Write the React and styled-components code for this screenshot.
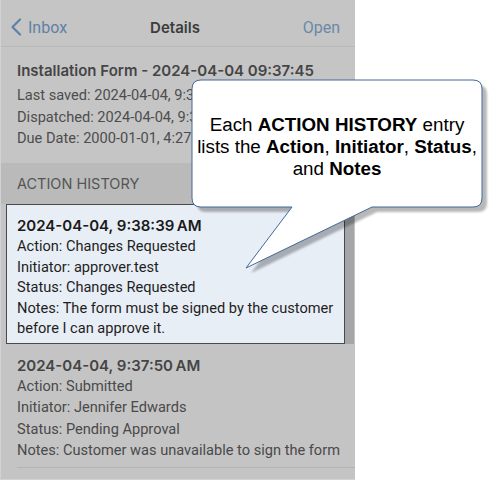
import React from "react";
import styled, { createGlobalStyle } from "styled-components";

const GlobalStyle = createGlobalStyle`
  html, body {
    margin: 0;
    padding: 0;
    background: #ffffff;
  }
  body {
    font-family: Roboto, "Noto Sans", sans-serif;
  }
`;

const entries = [
  {
    time: "2024-04-04, 9:38:39\u2009AM",
    action: "Changes Requested",
    initiator: "approver.test",
    status: "Changes Requested",
    notes: "The form must be signed by the customer before I can approve it.",
    active: true,
  },
  {
    time: "2024-04-04, 9:37:50\u2009AM",
    action: "Submitted",
    initiator: "Jennifer Edwards",
    status: "Pending Approval",
    notes: "Customer was unavailable to sign the form",
  },
];

const App = () => {
  return (
    <Page>
      <GlobalStyle />
      <Phone>
        <NavBar>
          <BackLink>
            <svg width="12" height="18" viewBox="0 0 12 18">
              <path
                d="M10 1.5 L2.5 9 L10 16.5"
                fill="none"
                stroke="#5f81a4"
                strokeWidth="2.2"
                strokeLinecap="round"
                strokeLinejoin="round"
              />
            </svg>
            Inbox
          </BackLink>
          <NavTitle>Details</NavTitle>
          <NavAction>Open</NavAction>
        </NavBar>

        <InfoSection>
          <FormTitle>Installation Form - 2024-04-04 09:37:45</FormTitle>
          <InfoLines>
            <InfoLine>Last saved: 2024-04-04, 9:37:45 AM</InfoLine>
            <InfoLine>Dispatched: 2024-04-04, 9:37:45 AM</InfoLine>
            <InfoLine>Due Date: 2000-01-01, 4:27 PM</InfoLine>
          </InfoLines>
        </InfoSection>

        <SectionHeader>ACTION HISTORY</SectionHeader>

        {entries.map((e, idx) => (
          <Entry key={`entry_${idx}`} $active={e.active}>
            <EntryTime $active={e.active}>{e.time}</EntryTime>
            <EntryLine $active={e.active}>Action: {e.action}</EntryLine>
            <EntryLine $active={e.active}>Initiator: {e.initiator}</EntryLine>
            <EntryLine $active={e.active}>Status: {e.status}</EntryLine>
            <EntryLine $active={e.active}>Notes: {e.notes}</EntryLine>
          </Entry>
        ))}
      </Phone>

      <Callout>
        <svg width="305" height="205" viewBox="0 0 305 205">
          <defs>
            <filter id="soft" x="-10%" y="-10%" width="130%" height="130%">
              <feGaussianBlur stdDeviation="0.8" />
            </filter>
          </defs>
          <path
            d="M13 4 H285 Q294 4 294 13 V122 Q294 131 285 131 H184 L58 192 L104 131 H13 Q4 131 4 122 V13 Q4 4 13 4 Z"
            fill="rgba(0,0,0,0.28)"
            transform="translate(5 5)"
            filter="url(#soft)"
          />
          <path
            d="M13 4 H285 Q294 4 294 13 V122 Q294 131 285 131 H184 L58 192 L104 131 H13 Q4 131 4 122 V13 Q4 4 13 4 Z"
            fill="#ffffff"
            stroke="#41699a"
            strokeWidth="1"
          />
        </svg>
        <CalloutText>
          Each <b>ACTION HISTORY</b> entry
          <br />
          lists the <b>Action</b>, <b>Initiator</b>, <b>Status</b>,
          <br />
          and <b>Notes</b>
        </CalloutText>
      </Callout>
    </Page>
  );
};

const Page = styled.div`
  position: relative;
  width: 497px;
  height: 481px;
  overflow: hidden;
  background: #ffffff;
`;

const Phone = styled.div`
  width: 355px;
  height: 480px;
  background: #c4c4c4;
  border-left: 1px solid #d2d2d2;
  border-bottom: 1px solid #d2d2d2;
  box-sizing: border-box;
  display: flex;
  flex-direction: column;
  overflow: hidden;

  & > * {
    flex-shrink: 0;
  }
`;

const NavBar = styled.div`
  height: 47px;
  box-sizing: border-box;
  padding: 8px 15px 0 9px;
  display: grid;
  grid-template-columns: 1fr auto 1fr;
  align-items: center;
  border-bottom: 1px solid #b9b9b9;
  background: #c5c5c5;
  font-size: 16px;
`;

const BackLink = styled.div`
  display: flex;
  align-items: center;
  gap: 6px;
  color: #5f81a4;
`;

const NavTitle = styled.div`
  font-family: Inter, sans-serif;
  font-size: 15px;
  font-weight: 600;
  color: #3c3c3c;
`;

const NavAction = styled.div`
  justify-self: end;
  color: #6a89a8;
`;

const InfoSection = styled.div`
  padding: 12px 16px 13px;
  background: #c5c5c5;
  color: #4d4d4d;
  font-size: 14.6px;
`;

const FormTitle = styled.div`
  font-family: Inter, sans-serif;
  font-size: 15px;
  font-weight: 600;
  line-height: 24px;
  color: #454545;
`;

const InfoLines = styled.div`
  margin-top: 2px;
`;

const InfoLine = styled.div`
  line-height: 21.5px;
`;

const SectionHeader = styled.div`
  height: 41px;
  display: flex;
  align-items: center;
  padding-left: 16px;
  background: #bababa;
  color: #555555;
  font-family: Inter, sans-serif;
  font-size: 14.5px;
`;

const Entry = styled.div`
  margin: ${(p) => (p.$active ? "0 10px 0 5px" : "0 0 0 16px")};
  padding: ${(p) => (p.$active ? "11px 3px 4px 10px" : "11px 0 6px")};
  background: ${(p) => (p.$active ? "#e8eef6" : "transparent")};
  border: ${(p) => (p.$active ? "1px solid #4a4a4a" : "none")};
  border-bottom: 1px solid ${(p) => (p.$active ? "#4a4a4a" : "#b3b3b3")};
  box-shadow: ${(p) => (p.$active ? "9px 0 0 #a4a6a8" : "none")};
  font-size: 14.6px;
`;

const EntryTime = styled.div`
  font-family: Inter, sans-serif;
  font-weight: 600;
  font-size: 15px;
  line-height: ${(p) => (p.$active ? "20.6px" : "21px")};
  color: ${(p) => (p.$active ? "#1a1a1a" : "#444444")};
`;

const EntryLine = styled.div`
  line-height: ${(p) => (p.$active ? "20.6px" : "21.3px")};
  color: ${(p) => (p.$active ? "#1e1e1e" : "#4a4a4a")};
`;

const Callout = styled.div`
  position: absolute;
  left: 188px;
  top: 76px;
  width: 305px;
  height: 205px;
`;

const CalloutText = styled.div`
  position: absolute;
  left: 0;
  top: 38px;
  width: 298px;
  text-align: center;
  font-family: "Liberation Sans", Arial, sans-serif;
  font-size: 18.8px;
  line-height: 22px;
  color: #000000;

  b {
    font-weight: 700;
  }
`;

export default App;
